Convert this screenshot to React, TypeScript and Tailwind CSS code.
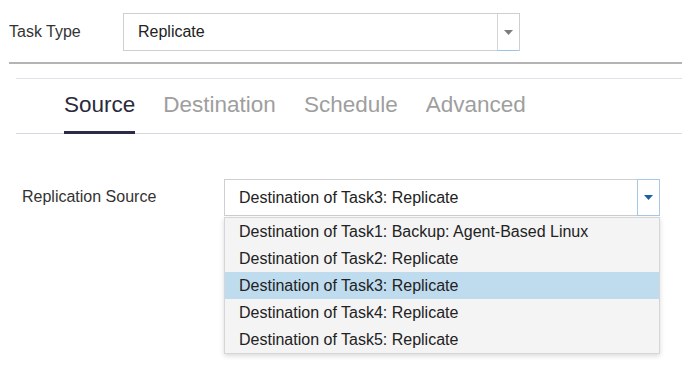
import { useState } from "react"

const tabs = ["Source", "Destination", "Schedule", "Advanced"]

const sources = [
  "Destination of Task1: Backup: Agent-Based Linux",
  "Destination of Task2: Replicate",
  "Destination of Task3: Replicate",
  "Destination of Task4: Replicate",
  "Destination of Task5: Replicate",
]

export default function App() {
  const [active] = useState("Source")
  const [selected] = useState(2)

  return (
    <div className="w-[682px] h-[373px] bg-white overflow-hidden font-['Liberation_Sans',Arial,sans-serif] text-[#333]">
      {/* task type */}
      <div className="flex items-center pl-[9px] pt-[13px]">
        <div className="w-[114px] text-[16px]">Task Type</div>
        <div className="flex h-[38px] w-[397px] border border-[#cfcfcf] bg-white">
          <div className="flex-1 flex items-center pl-[14px] text-[16px] text-[#222]">Replicate</div>
          <div className="w-[22px] flex items-center justify-center border-l border-[#d4d4d4] border-b border-b-[#9cc3ea] -mb-px">
            <svg width="9" height="5" viewBox="0 0 9 5">
              <path d="M0 0h9L4.5 5z" fill="#7d7d7d" />
            </svg>
          </div>
        </div>
      </div>

      <div className="ml-[9px] mt-[11px] h-[2px] bg-[#b4b4b4]" />

      <div className="ml-[16px] mt-[14px] border-t border-[#dfe3e8]">
        <div className="flex gap-[28px] pl-[48px] pt-[12px] border-b border-[#d6dae0]">
          {tabs.map((t) => (
            <div
              key={t}
              className={
                t === active
                  ? "pb-[12px] text-[22.5px] leading-[27px] text-[#2a2a3c] border-b-[3px] border-[#2c2c48] -mb-px"
                  : "pb-[15px] text-[22.5px] leading-[27px] text-[#9e9e9e]"
              }
            >
              {t}
            </div>
          ))}
        </div>
      </div>

      {/* replication source */}
      <div className="flex items-start pl-[22px] pt-[45px]">
        <div className="w-[202px] pt-[8px] text-[16px] leading-[20px]">Replication Source</div>
        <div className="relative">
          <div className="flex h-[37px] w-[436px] border border-[#cfcfcf] bg-white">
            <div className="flex-1 flex items-center pl-[14px] text-[16px] text-[#222]">
              Destination of Task3: Replicate
            </div>
            <div className="w-[23px] -my-px -mr-px flex items-center justify-center border border-[#a8c8e8] bg-white">
              <svg width="9" height="5" viewBox="0 0 9 5">
                <path d="M0 0h9L4.5 5z" fill="#1d5fa3" />
              </svg>
            </div>
          </div>
          <div className="absolute left-0 top-[38px] w-[436px] bg-[#f4f4f4] border border-[#d6d6d6] shadow-[0_2px_5px_rgba(0,0,0,0.15)]">
            {sources.map((s, i) => (
              <div
                key={s}
                className={
                  i === selected
                    ? "h-[27px] pl-[14px] flex items-center text-[16px] text-[#222] bg-[#bfdcef]"
                    : "h-[27px] pl-[14px] flex items-center text-[16px] text-[#222]"
                }
              >
                {s}
              </div>
            ))}
          </div>
        </div>
      </div>
    </div>
  )
}
